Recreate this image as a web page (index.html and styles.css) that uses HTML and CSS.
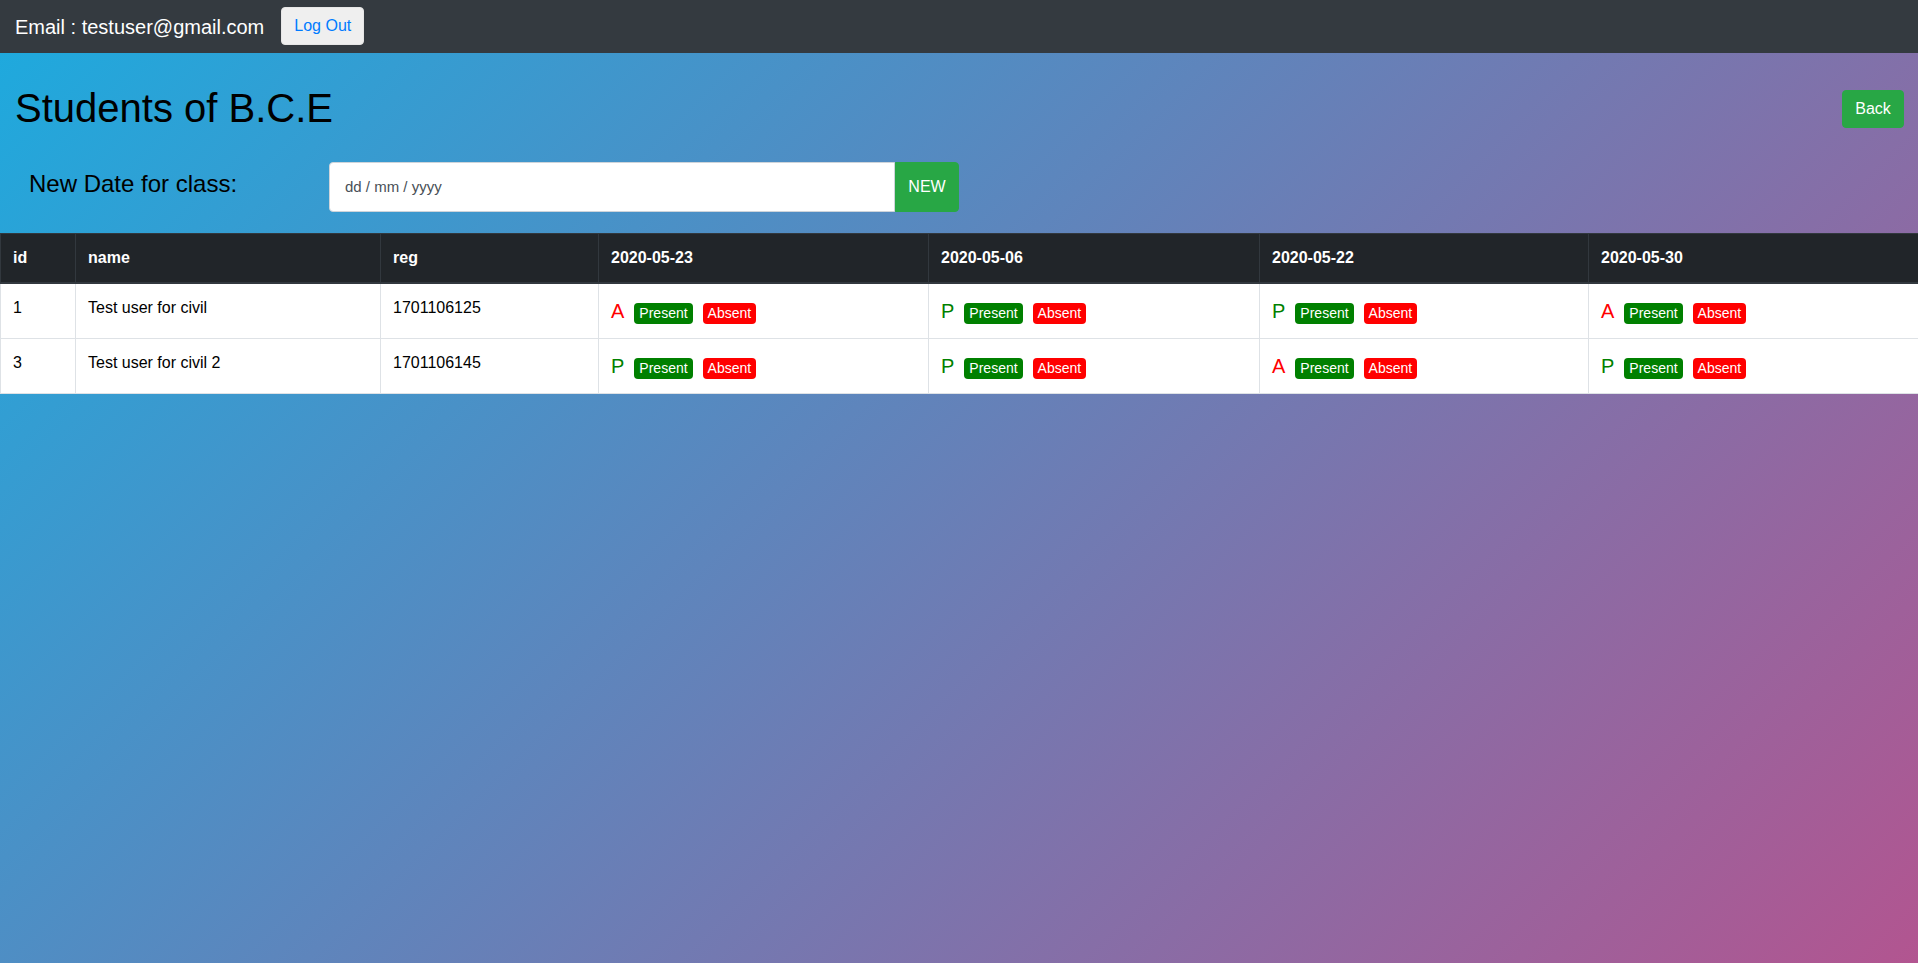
FILE: index.html
```html
<!DOCTYPE html>
<html lang="en">
<head>
<meta charset="utf-8">
<title>Students of B.C.E</title>
<link rel="stylesheet" href="styles.css">
</head>
<body>
<nav class="navbar">
  <span class="brand">Email : testuser@gmail.com</span>
  <button class="btn-logout">Log Out</button>
</nav>
<main class="page">
  <div class="title-row">
    <h1 class="title">Students of B.C.E</h1>
    <button class="btn-back">Back</button>
  </div>
  <div class="date-row">
    <h4 class="date-label">New Date for class:</h4>
    <div class="date-group">
      <div class="date-input">dd / mm / yyyy</div>
      <button class="btn-new">NEW</button>
    </div>
  </div>
  <table class="att-table">
    <colgroup>
      <col class="c-id"><col class="c-name"><col class="c-reg">
      <col class="c-d1"><col class="c-d2"><col class="c-d3"><col class="c-d4">
    </colgroup>
    <thead>
      <tr>
        <th>id</th><th>name</th><th>reg</th>
        <th>2020-05-23</th><th>2020-05-06</th><th>2020-05-22</th><th>2020-05-30</th>
      </tr>
    </thead>
    <tbody>
      <tr>
        <td>1</td><td>Test user for civil</td><td>1701106125</td>
        <td><div class="att"><span class="mark absent">A</span><span class="badge green">Present</span><span class="badge red">Absent</span></div></td>
        <td><div class="att"><span class="mark present">P</span><span class="badge green">Present</span><span class="badge red">Absent</span></div></td>
        <td><div class="att"><span class="mark present">P</span><span class="badge green">Present</span><span class="badge red">Absent</span></div></td>
        <td><div class="att"><span class="mark absent">A</span><span class="badge green">Present</span><span class="badge red">Absent</span></div></td>
      </tr>
      <tr>
        <td>3</td><td>Test user for civil 2</td><td>1701106145</td>
        <td><div class="att"><span class="mark present">P</span><span class="badge green">Present</span><span class="badge red">Absent</span></div></td>
        <td><div class="att"><span class="mark present">P</span><span class="badge green">Present</span><span class="badge red">Absent</span></div></td>
        <td><div class="att"><span class="mark absent">A</span><span class="badge green">Present</span><span class="badge red">Absent</span></div></td>
        <td><div class="att"><span class="mark present">P</span><span class="badge green">Present</span><span class="badge red">Absent</span></div></td>
      </tr>
    </tbody>
  </table>
</main>
</body>
</html>
```

FILE: styles.css
```css
* { box-sizing: border-box; }
html, body {
  margin: 0;
  padding: 0;
}
body {
  font-family: "Liberation Sans", Arial, sans-serif;
  font-size: 16px;
  line-height: 1.5;
  color: #212529;
  background: #343a40;
}
.navbar {
  height: 53px;
  background: #343a40;
  display: flex;
  align-items: center;
  padding: 0 15px;
}
.brand {
  color: #fff;
  font-size: 20px;
  line-height: 30px;
  margin-right: 17px;
}
.btn-logout {
  height: 38px;
  width: 83px;
  margin-top: -1px;
  background: #efefef;
  border: 1px solid #e6e6e6;
  border-radius: 4px;
  color: #007bff;
  font-family: inherit;
  font-size: 16px;
  padding: 0;
}
.page {
  min-height: calc(100vh - 53px);
  background: linear-gradient(135deg, #1fa9dd 0%, #b25590 100%);
  padding-top: 31px;
}
.title-row {
  display: flex;
  justify-content: space-between;
  align-items: center;
  padding: 0 14px 0 15px;
}
.title {
  margin: 0;
  font-size: 40px;
  font-weight: 400;
  line-height: 48px;
  color: #000;
}
.btn-back {
  height: 38px;
  width: 62px;
  padding: 0;
  margin-top: 2px;
  background: #28a745;
  border: 1px solid #28a745;
  border-radius: 4px;
  color: #fff;
  font-family: inherit;
  font-size: 16px;
}
.date-row {
  display: flex;
  align-items: center;
  margin-top: 30px;
  padding-left: 29px;
}
.date-label {
  width: 300px;
  margin: -7px 0 0 0;
  font-size: 24px;
  font-weight: 400;
  line-height: 29px;
  color: #000;
}
.date-group {
  display: flex;
}
.date-input {
  width: 566px;
  height: 50px;
  background: #fff;
  border: 1px solid #ced4da;
  border-radius: 4px 0 0 4px;
  padding-left: 15px;
  display: flex;
  align-items: center;
  font-size: 15px;
  color: #495057;
}
.btn-new {
  width: 64px;
  height: 50px;
  padding: 0;
  background: #28a745;
  border: 1px solid #28a745;
  border-radius: 0 4px 4px 0;
  color: #fff;
  font-family: inherit;
  font-size: 16px;
}
.att-table {
  margin-top: 21px;
  width: 100%;
  border-collapse: collapse;
  table-layout: fixed;
  background: #fff;
}
.c-id { width: 75px; }
.c-name { width: 305px; }
.c-reg { width: 218px; }
.c-d1 { width: 330px; }
.c-d2 { width: 331px; }
.c-d3 { width: 329px; }
.c-d4 { width: 330px; }
.att-table th {
  background: #212529;
  color: #fff;
  font-weight: 700;
  text-align: left;
  vertical-align: bottom;
  padding: 12px;
  border: 1px solid #32383e;
  border-bottom-width: 2px;
}
.att-table td {
  padding: 12px;
  vertical-align: top;
  border: 1px solid #dee2e6;
  color: #000;
}
.att {
  display: flex;
  align-items: baseline;
  gap: 10px;
}
.mark {
  font-size: 20px;
  line-height: 30px;
}
.mark.absent { color: #ff0000; }
.mark.present { color: #008000; }
.badge {
  font-size: 14px;
  line-height: 21px;
  padding: 0 5px;
  border-radius: 4px;
  color: #fff;
}
.badge.green { background: #008000; }
.badge.red { background: #ff0000; }
```
